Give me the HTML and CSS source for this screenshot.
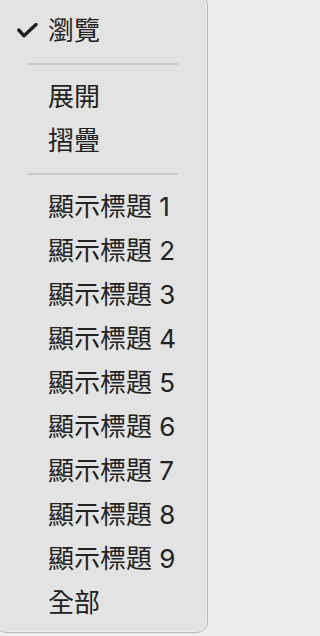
FILE: index.html
```html
<!DOCTYPE html>
<html lang="zh-Hant">
<head>
<meta charset="utf-8">
<link rel="stylesheet" href="styles.css">
</head>
<body>
<div class="menu">
  <div class="item"><span class="check"><svg width="21" height="15" viewBox="0 0 21 15"><path d="M1.8 7 L7 12.8 L19 1.6" fill="none" stroke="#1f1f1f" stroke-width="3.4" stroke-linecap="round" stroke-linejoin="round"/></svg></span><span class="label">瀏覽</span></div>
  <div class="sep"></div>
  <div class="item"><span class="check"></span><span class="label">展開</span></div>
  <div class="item"><span class="check"></span><span class="label">摺疊</span></div>
  <div class="sep"></div>
  <div class="item"><span class="check"></span><span class="label">顯示標題 1</span></div>
  <div class="item"><span class="check"></span><span class="label">顯示標題 2</span></div>
  <div class="item"><span class="check"></span><span class="label">顯示標題 3</span></div>
  <div class="item"><span class="check"></span><span class="label">顯示標題 4</span></div>
  <div class="item"><span class="check"></span><span class="label">顯示標題 5</span></div>
  <div class="item"><span class="check"></span><span class="label">顯示標題 6</span></div>
  <div class="item"><span class="check"></span><span class="label">顯示標題 7</span></div>
  <div class="item"><span class="check"></span><span class="label">顯示標題 8</span></div>
  <div class="item"><span class="check"></span><span class="label">顯示標題 9</span></div>
  <div class="item"><span class="check"></span><span class="label">全部</span></div>
</div>
</body>
</html>
```
FILE: styles.css
```css
html, body {
  margin: 0;
  padding: 0;
  background: #eeeeee;
  overflow: hidden;
}
body {
  width: 210px;
  height: 636px;
  font-family: "Inter", "Noto Sans CJK TC", sans-serif;
  color: #222222;
}
.menu {
  box-sizing: border-box;
  width: 213px;
  height: 639px;
  margin: -6px 0 0 -5px;
  padding: 14px 0 0 0;
  background: #e3e3e3;
  border: 1px solid #b8b8b8;
  border-radius: 11px;
  box-shadow: inset 0 0 0 1px #ececec;
}
.item {
  display: flex;
  align-items: center;
  height: 44px;
  padding-left: 22px;
  font-size: 26px;
  line-height: 44px;
}
.check {
  width: 30px;
  height: 44px;
  display: flex;
  align-items: center;
  flex: none;
}
.check svg {
  display: block;
  margin-top: -1px;
  margin-left: -1px;
}
.label {
  white-space: nowrap;
}
.sep {
  height: 22px;
  display: flex;
  align-items: center;
  padding: 0 29px 0 32px;
}
.sep::before {
  content: "";
  display: block;
  width: 100%;
  height: 2px;
  background: #c9c9c9;
}
```
